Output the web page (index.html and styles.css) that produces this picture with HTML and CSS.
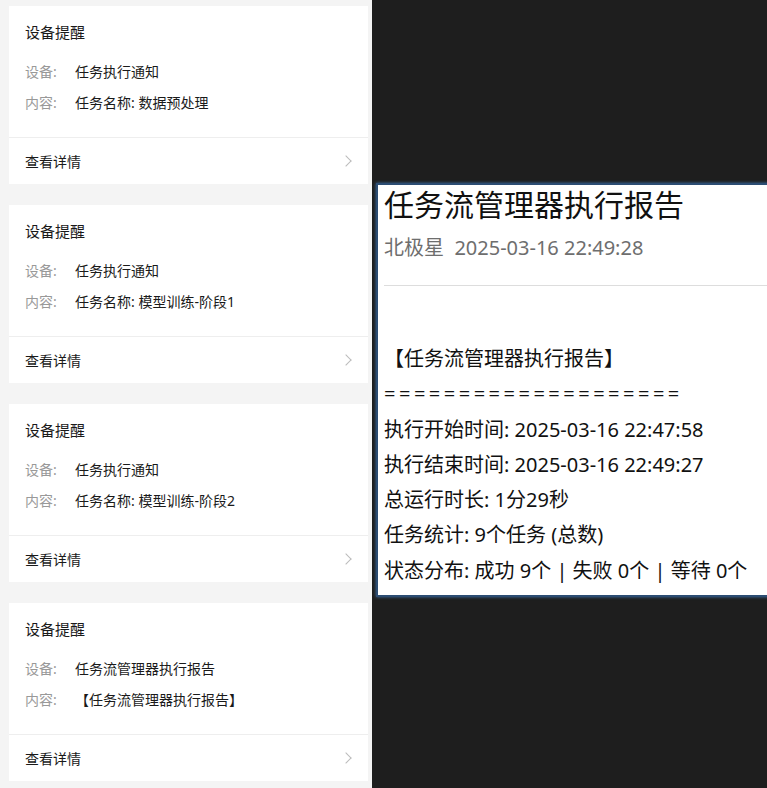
FILE: index.html
```html
<!DOCTYPE html>
<html lang="zh-CN">
<head>
  <meta charset="UTF-8" />
  <meta name="viewport" content="width=device-width, initial-scale=1.0" />
  <title>设备提醒</title>
  <link rel="stylesheet" href="styles.css">
</head>
<body>
  <div class="lista">
    <div class="cartao">
      <div class="cartao-corpo">
        <div class="cartao-titulo">设备提醒</div>
        <div class="linha"><span class="rotulo">设备:</span><span class="valor">任务执行通知</span></div>
        <div class="linha"><span class="rotulo">内容:</span><span class="valor">任务名称: 数据预处理</span></div>
      </div>
      <div class="cartao-rodape">查看详情<span class="seta"></span></div>
    </div>

    <div class="cartao">
      <div class="cartao-corpo">
        <div class="cartao-titulo">设备提醒</div>
        <div class="linha"><span class="rotulo">设备:</span><span class="valor">任务执行通知</span></div>
        <div class="linha"><span class="rotulo">内容:</span><span class="valor">任务名称: 模型训练-阶段1</span></div>
      </div>
      <div class="cartao-rodape">查看详情<span class="seta"></span></div>
    </div>

    <div class="cartao">
      <div class="cartao-corpo">
        <div class="cartao-titulo">设备提醒</div>
        <div class="linha"><span class="rotulo">设备:</span><span class="valor">任务执行通知</span></div>
        <div class="linha"><span class="rotulo">内容:</span><span class="valor">任务名称: 模型训练-阶段2</span></div>
      </div>
      <div class="cartao-rodape">查看详情<span class="seta"></span></div>
    </div>

    <div class="cartao">
      <div class="cartao-corpo">
        <div class="cartao-titulo">设备提醒</div>
        <div class="linha"><span class="rotulo">设备:</span><span class="valor">任务流管理器执行报告</span></div>
        <div class="linha"><span class="rotulo">内容:</span><span class="valor">【任务流管理器执行报告】</span></div>
      </div>
      <div class="cartao-rodape">查看详情<span class="seta"></span></div>
    </div>
  </div>

  <div class="palco">
    <div class="relatorio">
      <h1 class="relatorio-titulo">任务流管理器执行报告</h1>
      <div class="relatorio-meta">北极星&nbsp;&nbsp;2025-03-16 22:49:28</div>
      <div class="relatorio-texto">
        <p>【任务流管理器执行报告】</p>
        <p class="igual">====================</p>
        <p>执行开始时间: 2025-03-16 22:47:58</p>
        <p>执行结束时间: 2025-03-16 22:49:27</p>
        <p>总运行时长: 1分29秒</p>
        <p>任务统计: 9个任务 (总数)</p>
        <p>状态分布: 成功 9个 | 失败 0个 | 等待 0个</p>
      </div>
    </div>
  </div>
</body>
</html>
```

FILE: styles.css
```css
body {
  margin: 0;
  height: 788px;
  display: flex;
  background: #1e1e1e;
  overflow: hidden;
  font-family: 'Noto Sans', 'Noto Sans CJK SC', sans-serif;
}

/* coluna de avisos */
.lista {
  width: 359px;
  flex-shrink: 0;
  background: #f4f4f4;
  padding: 6px 4px 0 9px;
  display: flex;
  flex-direction: column;
  gap: 21px;
}
.cartao {
  background: #fff;
  height: 178px;
  display: flex;
  flex-direction: column;
}
.cartao-corpo {
  padding: 16px 16px 0 16px;
  height: 115px;
  border-bottom: 1px solid #eee;
}
.cartao-titulo {
  font-size: 15px;
  line-height: 20px;
  color: #1a1a1a;
  margin-bottom: 14px;
}
.linha {
  font-size: 14px;
  line-height: 31px;
  display: flex;
}
.rotulo {
  width: 50px;
  color: #999;
}
.valor {
  color: #1a1a1a;
}
.cartao-rodape {
  flex: 1;
  display: flex;
  align-items: center;
  justify-content: space-between;
  padding: 0 18px 0 16px;
  font-size: 14px;
  color: #1a1a1a;
}
.seta {
  width: 7px;
  height: 7px;
  border-top: 1px solid #bbb;
  border-right: 1px solid #bbb;
  transform: rotate(45deg);
}

/* painel do relatorio */
.palco {
  flex: 1;
  min-width: 0;
  overflow: hidden;
  padding: 183px 0 0 4px;
}
.relatorio {
  width: 420px;
  height: 410px;
  background: #fff;
  border: 2px solid #2c4d73;
  box-shadow: 0 0 3px #3d6fa3;
  padding: 0 0 0 6px;
  color: #111;
}
.relatorio-titulo {
  margin: 0;
  font-size: 30px;
  font-weight: 400;
  line-height: 40px;
}
.relatorio-meta {
  margin-top: 8px;
  font-size: 20px;
  line-height: 30px;
  color: #6e6e6e;
  padding-bottom: 22px;
  border-bottom: 1px solid #ddd;
}
.relatorio-texto {
  padding-top: 55px;
  font-size: 20px;
  line-height: 35.3px;
}
.relatorio-texto p {
  margin: 0;
}
.igual {
  letter-spacing: 3.5px;
}
```
